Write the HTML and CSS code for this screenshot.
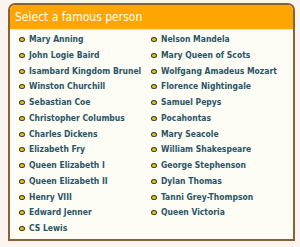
FILE: index.html
```html
<!DOCTYPE html>
<html>
<head>
<meta charset="utf-8">
<link rel="stylesheet" href="styles.css">
</head>
<body>
<div class="panel">
  <div class="panel-head">Select a famous person</div>
  <div class="panel-body">
    <ul class="people">
      <li>Mary Anning</li>
      <li>John Logie Baird</li>
      <li>Isambard Kingdom Brunel</li>
      <li>Winston Churchill</li>
      <li>Sebastian Coe</li>
      <li>Christopher Columbus</li>
      <li>Charles Dickens</li>
      <li>Elizabeth Fry</li>
      <li>Queen Elizabeth I</li>
      <li>Queen Elizabeth II</li>
      <li>Henry VIII</li>
      <li>Edward Jenner</li>
      <li>CS Lewis</li>
    </ul>
    <ul class="people">
      <li>Nelson Mandela</li>
      <li>Mary Queen of Scots</li>
      <li>Wolfgang Amadeus Mozart</li>
      <li>Florence Nightingale</li>
      <li>Samuel Pepys</li>
      <li>Pocahontas</li>
      <li>Mary Seacole</li>
      <li>William Shakespeare</li>
      <li>George Stephenson</li>
      <li>Dylan Thomas</li>
      <li>Tanni Grey-Thompson</li>
      <li>Queen Victoria</li>
    </ul>
  </div>
</div>
</body>
</html>
```
FILE: styles.css
```css
html, body {
  margin: 0;
  padding: 0;
  background: #fcf4ee;
}
body {
  padding: 3px 5px 0 8px;
  font-family: "DejaVu Sans Condensed", "DejaVu Sans", Verdana, sans-serif;
}
.panel {
  width: 283px;
  height: 234px;
  border: 2px solid #8a6238;
  border-radius: 7px 7px 0 0;
  background: #fdfdf5;
  overflow: hidden;
}
.panel-head {
  background: #ffa500;
  color: #ffffff;
  font-size: 12px;
  height: 24px;
  line-height: 24px;
  padding-left: 5px;
  border-bottom: 1px solid #f0e6c8;
}
.panel-body {
  display: grid;
  grid-template-columns: 132px 1fr;
  padding: 2px 0 0 9px;
}
.people {
  list-style: none;
  margin: 0;
  padding: 0;
}
.people li {
  position: relative;
  padding-left: 10px;
  font-size: 8.5px;
  font-weight: bold;
  color: #2b5566;
  line-height: 15.75px;
  white-space: nowrap;
}
.people li::before {
  content: "";
  position: absolute;
  left: 0;
  top: 5px;
  width: 4px;
  height: 3px;
  border: 1px solid #3a3418;
  border-radius: 50%;
  background: #e8c81a;
}
```
